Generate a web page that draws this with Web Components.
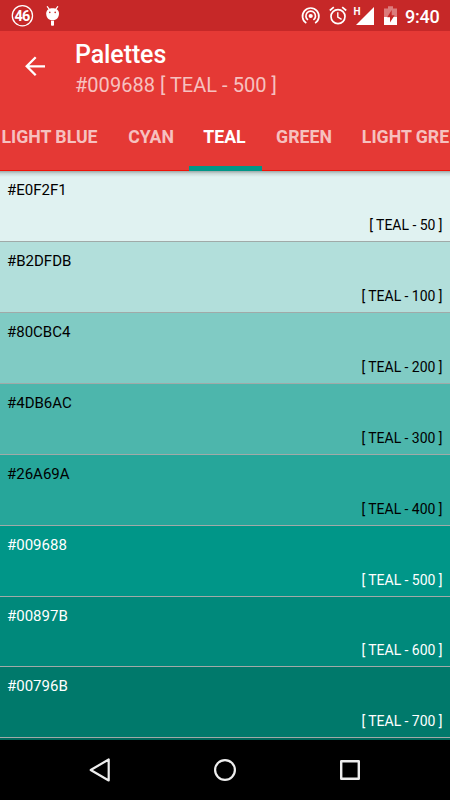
<!DOCTYPE html>
<html lang="en">
<head>
<meta charset="utf-8">
<title>Palettes</title>
<style>
html,body{margin:0;padding:0}
body{width:450px;height:800px;overflow:hidden;background:#000;font-family:Roboto,"Liberation Sans",sans-serif}
</style>
</head>
<body>
<palette-app></palette-app>
<script>
const define = (name, html, setup) => customElements.define(name, class extends HTMLElement {
  constructor() {
    super();
    this.attachShadow({mode: 'open'}).innerHTML = html;
  }
  connectedCallback() { if (setup) setup(this, this.shadowRoot); }
});

define('status-bar', `
<style>
:host{display:flex;align-items:center;justify-content:space-between;height:31px;background:#c62828;color:#fff;box-sizing:border-box;flex:none}
svg{display:block}
.r{display:flex;align-items:center}
.t{font-size:18px;line-height:31px;font-weight:500;width:45px;white-space:nowrap;letter-spacing:-.2px;padding-top:1px}
text{font-family:Roboto,sans-serif}
</style>
<svg width="70" height="31" viewBox="0 0 70 31">
  <circle cx="22.4" cy="15.7" r="10.1" fill="none" stroke="#fff" stroke-width="1.3"/>
  <text x="22.1" y="20.8" font-size="14.5" font-weight="700" fill="#fff" text-anchor="middle" letter-spacing="-.8">46</text>
  <path d="M47.3 6.7l2.2 3M57.7 6.7l-2.2 3" stroke="#fff" stroke-width="1.2" stroke-linecap="round"/>
  <path d="M46.2 13.5C46.2 10 49 8.3 52.5 8.3S59 10 59 13.5C59 17.7 56.3 20.3 52.5 20.3S46.2 17.7 46.2 13.5Z" fill="#fff"/>
  <path d="M51 20.8h3v4.4q-1.500 1-3 0Z" fill="#fff"/>
  <circle cx="49.8" cy="12.4" r=".8" fill="#c62828"/><circle cx="55.2" cy="12.4" r=".8" fill="#c62828"/>
</svg>
<div class="r">
<svg width="106" height="31" viewBox="299 0 106 31">
  <g fill="none" stroke="#fff" stroke-width="1.7">
    <path d="M306.3 23.1A8.2 8.2 0 1 1 315.1 23.1"/>
    <path d="M308 19.9A4.8 4.8 0 1 1 313.4 19.9"/>
    <circle cx="338" cy="16.6" r="7"/>
    <path d="M329.8 10.5l4-3.4M346.2 10.5l-4-3.4"/>
    <path d="M337.8 12.2v4.8l3.8 2.3" stroke-width="1.4"/>
  </g>
  <circle cx="310.7" cy="16" r="2.1" fill="#fff"/>
  <text x="353.6" y="15.3" font-size="10" font-weight="700" fill="#fff">H</text>
  <path d="M374 7v18h-18Z" fill="#fff"/>
  <path d="M388 6.2h5v2.2h4V17h-13V8.400h4Z" fill="#dc7c7c"/>
  <path d="M384 17h13v8h-13Z" fill="#fff"/>
  <path d="M391.700 10l-4.500 7.300h2.800v5.200l4.600-7.300h-2.900Z" fill="#c62828"/>
</svg>
<span class="t">9:40</span>
</div>`);

define('app-bar', `
<style>
:host{display:flex;height:72px;background:#e53935;color:#fff;flex:none}
.back{width:75px;flex:none}
.back svg{display:block}
.titles{display:flex;flex-direction:column}
::slotted([slot=title]){font-size:25px;line-height:30px;font-weight:500;margin-top:9px;letter-spacing:-.1px}
::slotted([slot=sub]){font-size:20px;line-height:24px;margin-top:3px;color:#ffffffb3;letter-spacing:.03px}
</style>
<div class="back"><svg width="75" height="72" viewBox="0 31 75 72" fill="none" stroke="#fff" stroke-width="2.300"><path d="M45 66.300H27M35.700 57.300L26.700 66.300L35.700 75.300"/></svg></div>
<div class="titles"><slot name="title"></slot><slot name="sub"></slot></div>`);

define('tab-item', `
<style>
:host{display:flex;flex:none;justify-content:center;align-items:center;box-sizing:border-box;height:68px;font-size:17.700px;font-weight:700;color:#ffffffb3;white-space:nowrap;border-bottom:1px solid #f01207}
:host([active]){color:#fff;border-bottom:5px solid #009688;padding:4px 2px 0 0}
</style><slot></slot>`);

define('tab-strip', `
<style>
:host{display:flex;height:68px;background:#e53935;overflow:hidden;flex:none}
</style><slot></slot>`);

define('colour-row', `
<style>
:host{display:flex;flex-direction:column;justify-content:space-between;box-sizing:border-box;border-bottom:1px solid #a0aaa8;padding:10px 7.500px 7px 7px;flex:none}
.hex{font-size:15px;line-height:18px}
.name{font-size:14px;line-height:18px;text-align:right;letter-spacing:-.03px}
</style>
<span class="hex"></span><span class="name"></span>`, (el, root) => {
  root.querySelector('.hex').textContent = el.getAttribute('hex');
  root.querySelector('.name').textContent = '[ TEAL - ' + el.getAttribute('tone') + ' ]';
  el.style.background = el.getAttribute('hex');
  el.style.height = el.getAttribute('h') + 'px';
  el.style.color = el.hasAttribute('light') ? '#fff' : '#000';
});

define('colour-list', `
<style>
:host{display:flex;flex-direction:column;height:569px;overflow:hidden;background:#00695c;flex:none;position:relative}
:host::before{content:"";position:absolute;left:0;right:0;top:0;height:6px;background:linear-gradient(#0000004d,#0000001a 45%,#0000)}
</style><slot></slot>`);

define('nav-bar', `
<style>
:host{display:flex;height:60px;background:#000;flex:none;justify-content:center;align-items:center;gap:99px}
svg{display:block}
</style>
<svg width="26" height="26" viewBox="0 0 26 26" fill="none" stroke="#eee" stroke-width="2.200" stroke-linejoin="round"><path d="M21.700 2.500v21L3.700 13Z"/></svg>
<svg width="26" height="26" viewBox="0 0 26 26" fill="none" stroke="#eee" stroke-width="2.200"><circle cx="13" cy="13" r="9.900"/></svg>
<svg width="26" height="26" viewBox="0 0 26 26" fill="none" stroke="#eee" stroke-width="2.400" stroke-linejoin="round"><path d="M4.200 4.200h17.600v17.600H4.200Z"/></svg>`);

define('palette-app', `
<style>
:host{display:flex;flex-direction:column;width:450px;height:800px;overflow:hidden}
</style>
<status-bar></status-bar>
<app-bar><span slot="title">Palettes</span><span slot="sub">#009688 [ TEAL - 500 ]</span></app-bar>
<tab-strip>
<tab-item style="width:127px;margin-left:-14px">LIGHT BLUE</tab-item>
<tab-item style="width:76px">CYAN</tab-item>
<tab-item active style="width:73px">TEAL</tab-item>
<tab-item style="width:84px">GREEN</tab-item>
<tab-item style="width:119px">LIGHT GRE</tab-item>
</tab-strip>
<colour-list>
<colour-row h="71" hex="#E0F2F1" tone="50"></colour-row>
<colour-row h="71" hex="#B2DFDB" tone="100"></colour-row>
<colour-row h="71" hex="#80CBC4" tone="200"></colour-row>
<colour-row h="71" hex="#4DB6AC" tone="300"></colour-row>
<colour-row h="71" hex="#26A69A" tone="400"></colour-row>
<colour-row h="71" hex="#009688" tone="500" light></colour-row>
<colour-row h="70" hex="#00897B" tone="600" light></colour-row>
<colour-row h="71" hex="#00796B" tone="700" light></colour-row>
</colour-list>
<nav-bar></nav-bar>`);
</script>
</body>
</html>
